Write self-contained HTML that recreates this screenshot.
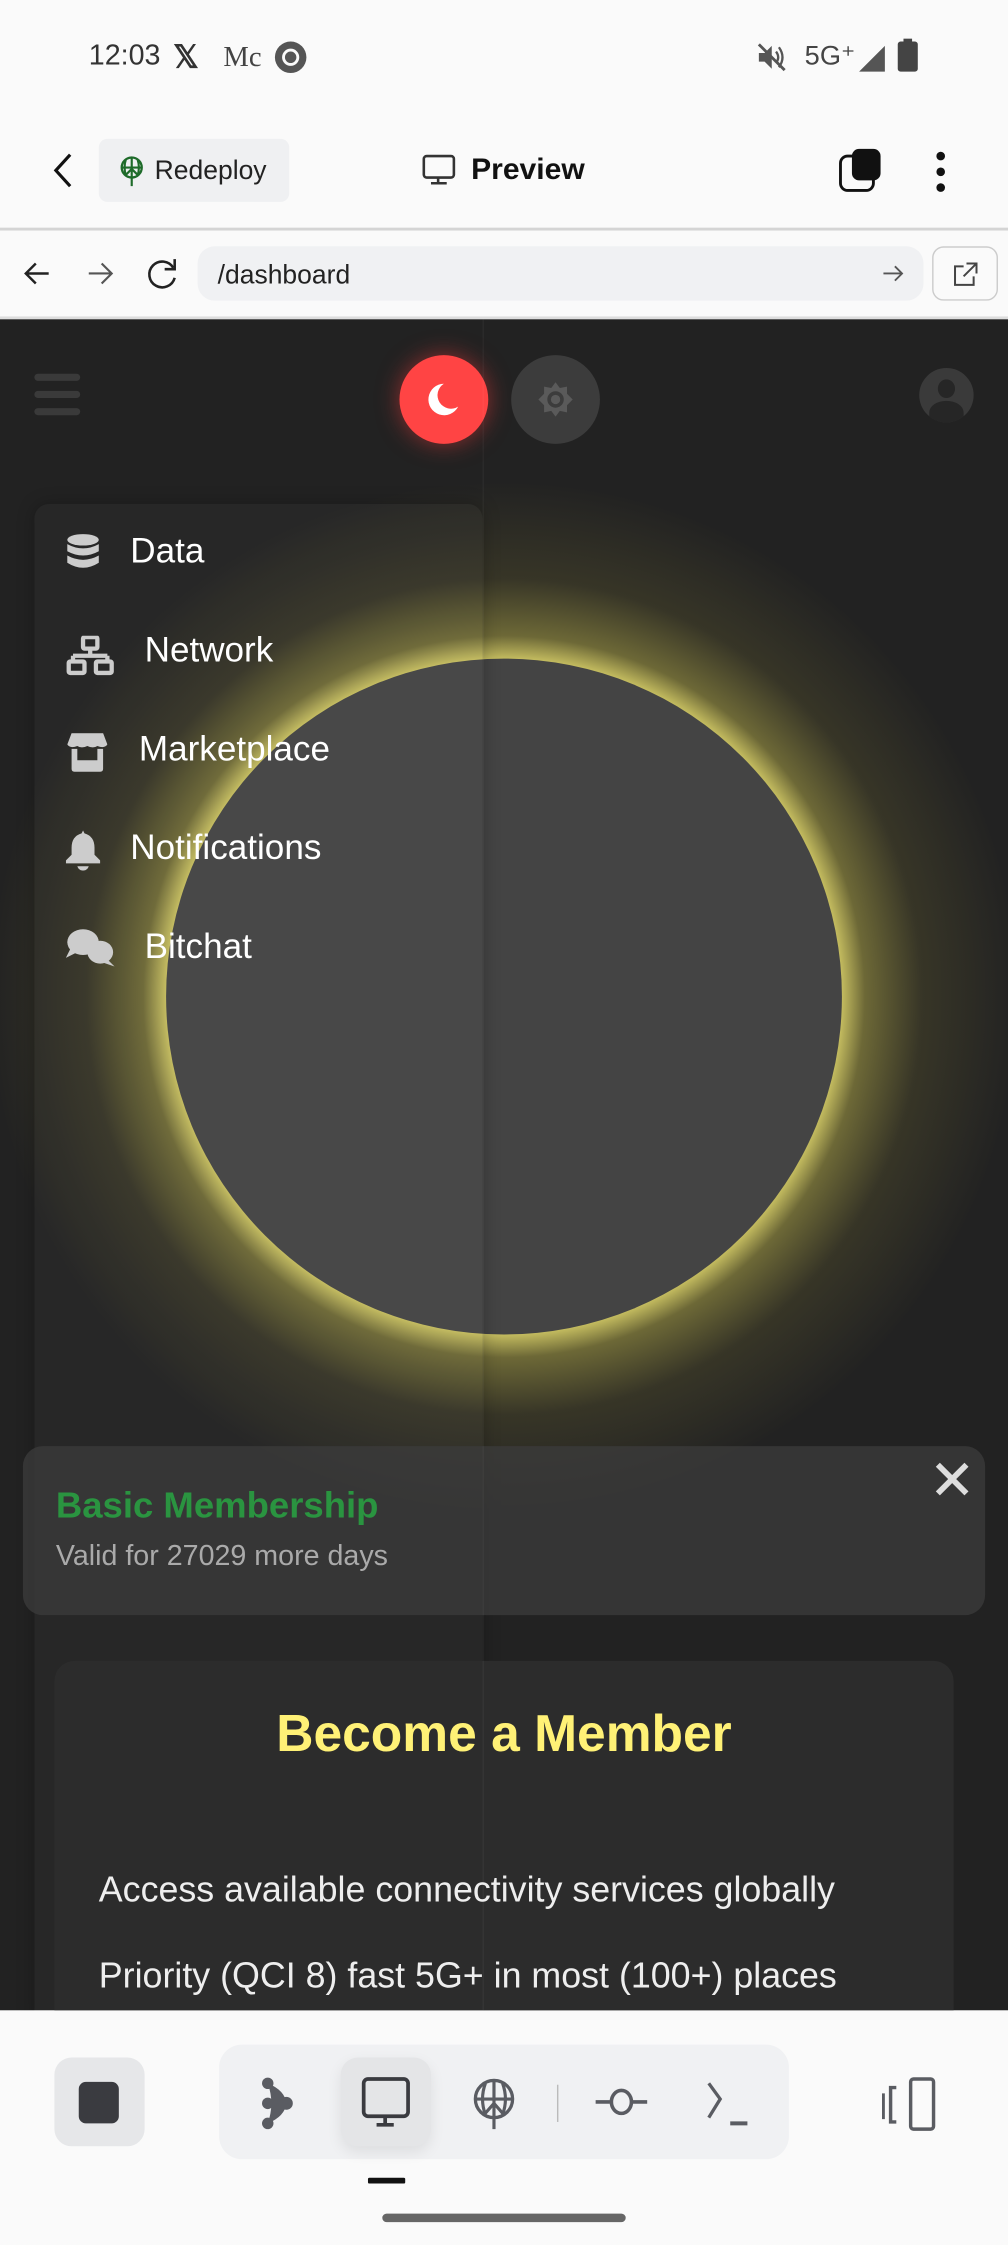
<!DOCTYPE html>
<html><head><meta charset="utf-8"><style>
*{margin:0;padding:0;box-sizing:border-box}
html,body{width:1008px;height:2244px;overflow:hidden;background:#fafafa}
#w{position:absolute;left:0;top:0;width:704px;height:1568px;transform:scale(1.43182);transform-origin:0 0;font-family:"Liberation Sans",sans-serif;background:#fafafa}
.a{position:absolute}
</style></head><body><div id="w">
<!-- status bar -->
<div class="a" style="left:62px;top:28px;font-size:20px;color:#333">12:03</div>
<div class="a" style="left:121px;top:27px;font-size:22px;color:#333;font-weight:bold">𝕏</div>
<div class="a" style="left:156px;top:29px;font-size:20px;color:#444;font-family:'Liberation Serif',serif">Mc</div>
<div class="a" style="left:192px;top:29px;width:22px;height:22px;border-radius:50%;background:#555"><div class="a" style="left:5px;top:5px;width:12px;height:12px;border-radius:50%;border:2px solid #fafafa"></div></div>
<svg class="a" style="left:528px;top:30px" width="22" height="20" viewBox="0 0 22 20"><path d="M2 7H6L11 2V18L6 13H2Z" fill="#555"/><path d="M14 6Q17 10 14 14M16 3Q21 10 16 17" stroke="#555" stroke-width="1.6" fill="none"/><path d="M2 1L20 19" stroke="#555" stroke-width="2"/></svg>
<div class="a" style="left:562px;top:28px;font-size:19px;color:#444">5G⁺</div>
<svg class="a" style="left:598px;top:30px" width="22" height="22"><path d="M20 2V20H2Z" fill="#555"/></svg>
<div class="a" style="left:627px;top:29px;width:14px;height:21px;background:#444;border-radius:2px"></div>
<div class="a" style="left:631px;top:27px;width:6px;height:3px;background:#444"></div>
<!-- app bar -->
<svg class="a" style="left:32px;top:106px" width="24" height="26"><path d="M17 2L7 13L17 24" stroke="#111" stroke-width="2.2" fill="none"/></svg>
<div class="a" style="left:69px;top:97px;width:133px;height:44px;background:#eff0f2;border-radius:6px"></div>
<svg class="a" style="left:82px;top:108px" width="20" height="24" viewBox="0 0 20 24"><circle cx="10" cy="9" r="7" fill="none" stroke="#1e6b2a" stroke-width="1.6"/><path d="M3 9H17M10 2V22M6 3Q4 9 6 15M14 3Q16 9 14 15M6 14L10 10L14 14" stroke="#1e6b2a" stroke-width="1.5" fill="none"/></svg>
<div class="a" style="left:108px;top:108px;font-size:18.5px;color:#222">Redeploy</div>
<svg class="a" style="left:294px;top:107px" width="26" height="26"><rect x="2" y="2" width="21" height="15" rx="2" fill="none" stroke="#333" stroke-width="1.8"/><path d="M12 17V21M7 21H18" stroke="#333" stroke-width="1.8"/></svg>
<div class="a" style="left:329px;top:107px;font-size:21px;color:#111;font-weight:bold">Preview</div>
<div class="a" style="left:586px;top:108px;width:25px;height:26px;border:2.5px solid #111;border-radius:6px;background:#fafafa"></div>
<div class="a" style="left:595px;top:104px;width:20px;height:22px;background:#111;border-radius:5px"></div>
<div class="a" style="left:654px;top:106px;width:6px;height:6px;border-radius:50%;background:#111"></div>
<div class="a" style="left:654px;top:117px;width:6px;height:6px;border-radius:50%;background:#111"></div>
<div class="a" style="left:654px;top:128px;width:6px;height:6px;border-radius:50%;background:#111"></div>
<div class="a" style="left:0;top:159px;width:704px;height:2px;background:#d4d4d4"></div>
<!-- url bar -->
<svg class="a" style="left:14px;top:180px" width="24" height="22"><path d="M20 11H4M11 4L4 11L11 18" stroke="#222" stroke-width="1.7" fill="none"/></svg>
<svg class="a" style="left:58px;top:180px" width="24" height="22"><path d="M4 11H20M13 4L20 11L13 18" stroke="#555" stroke-width="1.5" fill="none"/></svg>
<svg class="a" style="left:101px;top:178px" width="26" height="26"><path d="M20 9A9 9 0 1 0 21 16" stroke="#222" stroke-width="1.8" fill="none"/><path d="M21 3V10H14" stroke="#222" stroke-width="1.8" fill="none"/></svg>
<div class="a" style="left:138px;top:172px;width:507px;height:38px;background:#f0f1f3;border-radius:12px"></div>
<div class="a" style="left:152px;top:181px;font-size:18.5px;color:#222">/dashboard</div>
<svg class="a" style="left:615px;top:183px" width="18" height="16"><path d="M2 8H15M10 3L15 8L10 13" stroke="#555" stroke-width="1.3" fill="none"/></svg>
<div class="a" style="left:651px;top:172px;width:46px;height:38px;border:1.5px solid #ccc;border-radius:8px"></div>
<svg class="a" style="left:664px;top:182px" width="20" height="20"><path d="M9 4H3V17H16V11M11 2H18V9M18 2L9 11" stroke="#444" stroke-width="1.4" fill="none"/></svg>
<div class="a" style="left:0;top:221px;width:704px;height:2px;background:#ddd"></div>
<!-- dark content -->
<div class="a" style="left:0;top:223px;width:704px;height:1181px;background:#222;overflow:hidden">
  <div class="a" style="left:-8px;top:113px;width:720px;height:720px;border-radius:50%;background:radial-gradient(circle closest-side,rgba(235,225,110,.8) 0,rgba(235,225,110,.8) 236px,rgba(200,190,80,.45) 252px,rgba(150,140,60,.18) 292px,rgba(34,34,34,0) 360px)"></div>
  <div class="a" style="left:116px;top:237px;width:472px;height:472px;border-radius:50%;background:#444"></div>
  <div class="a" style="left:24px;top:129px;width:313px;height:1060px;background:rgba(255,255,255,.025);border-radius:10px 10px 0 0;box-shadow:0 0 12px rgba(0,0,0,.25)"></div>
  <!-- top bar -->
  <div class="a" style="left:24px;top:38px;width:32px;height:5px;border-radius:3px;background:#3a3a3a"></div>
  <div class="a" style="left:24px;top:50px;width:32px;height:5px;border-radius:3px;background:#3a3a3a"></div>
  <div class="a" style="left:24px;top:62px;width:32px;height:5px;border-radius:3px;background:#3a3a3a"></div>
  <div class="a" style="left:279px;top:25px;width:62px;height:62px;border-radius:50%;background:#ff4444;box-shadow:0 0 16px rgba(255,60,60,.5)"></div>
  <svg class="a" style="left:296px;top:42px" width="28" height="28" viewBox="0 0 28 28"><path d="M14 3A11 11 0 1 0 24 19A9 9 0 0 1 14 3Z" fill="#fff"/></svg>
  <div class="a" style="left:357px;top:25px;width:62px;height:62px;border-radius:50%;background:#3c3c3c"></div>
  <svg class="a" style="left:375px;top:43px" width="26" height="26" viewBox="0 0 26 26"><path d="M13 1L16 5L21 4L21 9L25 13L21 17L21 22L16 21L13 25L10 21L5 22L5 17L1 13L5 9L5 4L10 5Z" fill="#5a5a5a"/><circle cx="13" cy="13" r="4.5" fill="none" stroke="#3c3c3c" stroke-width="2.5"/></svg>
  <div class="a" style="left:642px;top:34px;width:38px;height:38px;border-radius:50%;background:#3a3a3a;overflow:hidden"><div class="a" style="left:13px;top:8px;width:12px;height:13px;border-radius:50%;background:#262626"></div><div class="a" style="left:7px;top:23px;width:24px;height:16px;border-radius:50% 50% 0 0;background:#262626"></div></div>
  <!-- menu -->
  <svg class="a" style="left:46px;top:149px" width="24" height="28" viewBox="0 0 24 28"><ellipse cx="12" cy="5" rx="11" ry="4" fill="#ccc"/><path d="M1 8Q12 14 23 8V13Q12 19 1 13Z M1 16Q12 22 23 16V21Q12 28 1 21Z" fill="#ccc"/></svg>
  <div class="a" style="left:91px;top:149px;font-size:24.5px;color:#fff">Data</div>
  <svg class="a" style="left:46px;top:221px" width="34" height="28" viewBox="0 0 34 28"><rect x="12" y="1" width="10" height="8" rx="1" fill="none" stroke="#ccc" stroke-width="3"/><path d="M17 9V14M5 14H29M5 14V18M29 14V18" stroke="#ccc" stroke-width="3"/><rect x="2" y="18" width="11" height="8" rx="1" fill="none" stroke="#ccc" stroke-width="3"/><rect x="21" y="18" width="11" height="8" rx="1" fill="none" stroke="#ccc" stroke-width="3"/></svg>
  <div class="a" style="left:101px;top:218px;font-size:24.5px;color:#fff">Network</div>
  <svg class="a" style="left:47px;top:289px" width="28" height="28" viewBox="0 0 28 28"><path d="M3 0H25L28 8Q26 11 21 9Q18 11 14 9Q10 11 7 9Q2 11 0 8Z" fill="#ccc"/><path d="M3 11H7V19H21V11H25V25Q25 27 23 27H5Q3 27 3 25Z" fill="#ccc"/></svg>
  <div class="a" style="left:97px;top:287px;font-size:24.5px;color:#fff">Marketplace</div>
  <svg class="a" style="left:46px;top:357px" width="24" height="28" viewBox="0 0 24 28"><path d="M12 0L13 2Q20 4 20 12V17L24 21V23H0V21L4 17V12Q4 4 11 2Z" fill="#ccc"/><path d="M8 25H16Q15 28 12 28Q9 28 8 25Z" fill="#ccc"/></svg>
  <div class="a" style="left:91px;top:356px;font-size:24.5px;color:#fff">Notifications</div>
  <svg class="a" style="left:46px;top:425px" width="34" height="28" viewBox="0 0 34 28"><ellipse cx="12" cy="10" rx="11" ry="9" fill="#ccc"/><path d="M3 15L0 21L8 17Z" fill="#ccc"/><ellipse cx="24" cy="17" rx="9" ry="8" fill="#ccc"/><path d="M29 22L34 27L25 24Z" fill="#ccc"/></svg>
  <div class="a" style="left:101px;top:425px;font-size:24.5px;color:#fff">Bitchat</div>
  <!-- membership card -->
  <div class="a" style="left:16px;top:787px;width:672px;height:118px;background:rgba(60,60,60,.75);border-radius:14px"></div>
  <div class="a" style="left:39px;top:815px;font-size:25.5px;font-weight:bold;color:#2a9440">Basic Membership</div>
  <div class="a" style="left:39px;top:853px;font-size:20px;color:#aaa">Valid for 27029 more days</div>
  <svg class="a" style="left:652px;top:797px" width="26" height="26"><path d="M3 3L23 23M23 3L3 23" stroke="#ddd" stroke-width="4"/></svg>
  <!-- become card -->
  <div class="a" style="left:38px;top:937px;width:628px;height:400px;background:#2c2c2c;border-radius:14px"></div>
  <div class="a" style="left:0;top:967px;width:704px;text-align:center;font-size:36px;font-weight:bold;color:#fff176">Become a Member</div>
  <div class="a" style="left:69px;top:1083px;font-size:25px;color:#eee">Access available connectivity services globally</div>
  <div class="a" style="left:69px;top:1143px;font-size:25px;color:#eee">Priority (QCI 8) fast 5G+ in most (100+) places</div>
  <div class="a" style="left:337px;top:0;width:1px;height:1181px;background:rgba(255,255,255,.04)"></div>
</div>
<!-- bottom bar -->
<div class="a" style="left:38px;top:1437px;width:63px;height:62px;background:#e6e7e9;border-radius:12px"></div>
<div class="a" style="left:55px;top:1454px;width:28px;height:29px;background:#3a3b40;border-radius:5px"></div>
<div class="a" style="left:153px;top:1428px;width:398px;height:80px;background:#f0f1f3;border-radius:16px"></div>
<div class="a" style="left:238px;top:1437px;width:63px;height:62px;background:#e4e5e7;border-radius:12px;box-shadow:0 4px 10px rgba(0,0,0,.08)"></div>
<svg class="a" style="left:178px;top:1450px" width="32" height="38" viewBox="0 0 32 38"><circle cx="9" cy="5" r="4" fill="#5a5c62"/><circle cx="9" cy="19" r="4" fill="#5a5c62"/><circle cx="9" cy="33" r="4" fill="#5a5c62"/><path d="M9 5Q21 10 22 19Q21 28 9 33Q14 19 9 5Z" fill="#5a5c62"/><circle cx="22" cy="19" r="4.5" fill="#5a5c62"/></svg>
<svg class="a" style="left:251px;top:1450px" width="38" height="36"><rect x="3" y="2" width="31" height="26" rx="3" fill="none" stroke="#3a3b40" stroke-width="2.6"/><path d="M18 28V33M12 34H24" stroke="#3a3b40" stroke-width="2.6"/></svg>
<svg class="a" style="left:329px;top:1450px" width="32" height="38" viewBox="0 0 32 38"><circle cx="16" cy="16" r="13" fill="none" stroke="#5a5c62" stroke-width="2.3"/><path d="M3 16H29M16 3V37M10 5Q6 16 10 27M22 5Q26 16 22 27M9 27L16 19L23 27" stroke="#5a5c62" stroke-width="2.2" fill="none"/></svg>
<div class="a" style="left:389px;top:1456px;width:1px;height:26px;background:#bbb"></div>
<svg class="a" style="left:414px;top:1456px" width="40" height="24"><path d="M2 12H12M28 12H38" stroke="#5a5c62" stroke-width="2.5"/><ellipse cx="20" cy="12" rx="7" ry="8" fill="none" stroke="#5a5c62" stroke-width="2.5"/></svg>
<svg class="a" style="left:492px;top:1452px" width="34" height="34"><path d="M3 3L11 14L3 27" stroke="#5a5c62" stroke-width="2.3" fill="none"/><path d="M18 31H30" stroke="#5a5c62" stroke-width="2.8"/></svg>
<svg class="a" style="left:614px;top:1450px" width="42" height="40"><path d="M3 12V30" stroke="#5a5c62" stroke-width="2"/><path d="M12 8H8V32H12" stroke="#5a5c62" stroke-width="2.4" fill="none"/><rect x="22" y="2" width="16" height="35" rx="2" fill="none" stroke="#5a5c62" stroke-width="2.4"/></svg>
<div class="a" style="left:257px;top:1521px;width:26px;height:4px;background:#111;border-radius:1px"></div>
<div class="a" style="left:267px;top:1546px;width:170px;height:6px;background:#666;border-radius:3px"></div>
</div></body></html>
